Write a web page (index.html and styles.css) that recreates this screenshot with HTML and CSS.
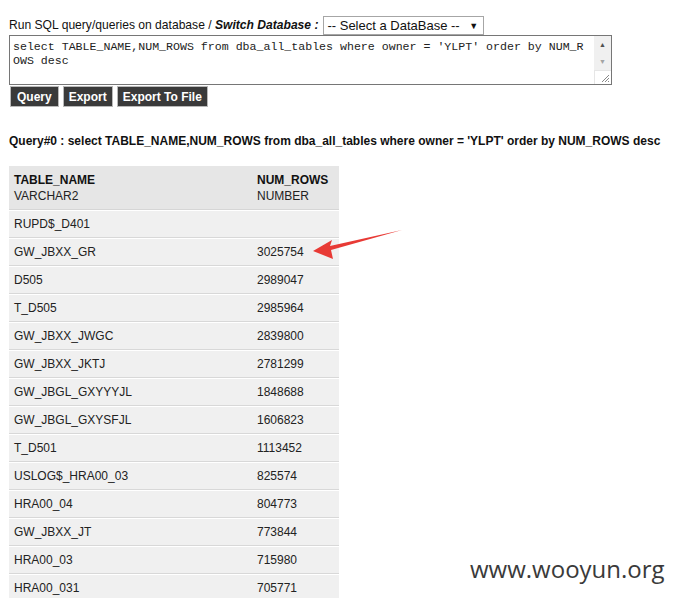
FILE: index.html
```html
<!DOCTYPE html>
<html>
<head>
<meta charset="utf-8">
<link rel="stylesheet" href="styles.css">
</head>
<body>
<form class="runner">
  <div class="topline">
    <span class="label">Run SQL query/queries on database / <b><i>Switch Database :</i></b></span>
    <span class="select">-- Select a DataBase -- <span class="caret">&#9660;</span></span>
  </div>
  <div class="editor">
    <textarea class="sql" spellcheck="false">select TABLE_NAME,NUM_ROWS from dba_all_tables where owner = 'YLPT' order by NUM_ROWS desc</textarea>
    <div class="scrollbar">
      <span class="sb-btn">&#9650;</span>
      <span class="sb-btn dim">&#9660;</span>
      <span class="grip">
        <svg width="9" height="9" viewBox="0 0 9 9"><path d="M8 1 L1 8 M8 4 L4 8 M8 7 L7 8" stroke="#888" stroke-width="1"/></svg>
      </span>
    </div>
  </div>
  <div class="buttons">
    <span class="btn">Query</span>
    <span class="btn">Export</span>
    <span class="btn">Export To File</span>
  </div>
</form>
<h3 class="qtitle">Query#0 : select TABLE_NAME,NUM_ROWS from dba_all_tables where owner = 'YLPT' order by NUM_ROWS desc</h3>
<table class="result">
  <thead>
    <tr><th><b>TABLE_NAME</b><br>VARCHAR2</th><th><b>NUM_ROWS</b><br>NUMBER</th></tr>
  </thead>
  <tbody>
    <tr><td>RUPD$_D401</td><td></td></tr>
    <tr><td>GW_JBXX_GR</td><td>3025754</td></tr>
    <tr><td>D505</td><td>2989047</td></tr>
    <tr><td>T_D505</td><td>2985964</td></tr>
    <tr><td>GW_JBXX_JWGC</td><td>2839800</td></tr>
    <tr><td>GW_JBXX_JKTJ</td><td>2781299</td></tr>
    <tr><td>GW_JBGL_GXYYYJL</td><td>1848688</td></tr>
    <tr><td>GW_JBGL_GXYSFJL</td><td>1606823</td></tr>
    <tr><td>T_D501</td><td>1113452</td></tr>
    <tr><td>USLOG$_HRA00_03</td><td>825574</td></tr>
    <tr><td>HRA00_04</td><td>804773</td></tr>
    <tr><td>GW_JBXX_JT</td><td>773844</td></tr>
    <tr><td>HRA00_03</td><td>715980</td></tr>
    <tr><td>HRA00_031</td><td>705771</td></tr>
  </tbody>
</table>
<svg class="arrow" width="100" height="34" viewBox="310 228 100 34">
  <polygon points="313,251 332,240 330,246 402,230 331,250 333,259" fill="#e83a35"/>
</svg>
<div class="watermark">www.wooyun.org</div>
</body>
</html>
```
FILE: styles.css
```css
html, body {
  margin: 0;
  padding: 0;
  background: #fff;
}
body {
  padding: 16px 0 0 9px;
  font-family: "Liberation Sans", Arial, sans-serif;
  font-size: 12px;
  color: #111;
  position: relative;
  height: 598px;
  overflow: hidden;
  box-sizing: border-box;
}
.runner {
  margin: 0;
}
.topline {
  display: flex;
  align-items: center;
  height: 19px;
}
.label {
  font-size: 12.1px;
  margin-right: 5px;
  margin-top: -1px;
}
.select {
  box-sizing: border-box;
  height: 19px;
  width: 161px;
  border: 1px solid #a6a6a6;
  padding: 0 0 0 3px;
  display: flex;
  align-items: center;
  color: #111;
  font-size: 13px;
  white-space: pre;
}
.caret {
  font-size: 9px;
  margin-left: 6px;
}
.editor {
  display: flex;
  box-sizing: border-box;
  width: 603px;
  height: 50px;
  border: 1px solid #767676;
  background: #fff;
}
.sql {
  flex: 1;
  display: block;
  box-sizing: border-box;
  height: 48px;
  margin: 0;
  border: 0;
  outline: none;
  padding: 4px 6px 0 3px;
  font-family: "Liberation Mono", "Courier New", monospace;
  font-size: 11.6px;
  line-height: 14px;
  color: #222;
  overflow: hidden;
  resize: none;
  word-break: break-all;
}
.scrollbar {
  width: 17px;
  display: flex;
  flex-direction: column;
  background: #fff;
}
.sb-btn {
  height: 17px;
  display: flex;
  align-items: center;
  justify-content: center;
  font-size: 7px;
  color: #505050;
  background: #f0f0f0;
}
.sb-btn.dim {
  color: #a3a3a3;
}
.grip {
  flex: 1;
  display: flex;
  align-items: flex-end;
  justify-content: flex-end;
  border-left: 1px solid #e6e6e6;
  border-top: 1px solid #e6e6e6;
}
.grip svg { display: block; margin: 0 1px 1px 0; }
.buttons {
  display: flex;
  gap: 4px;
  margin-top: 1px;
  margin-left: 1px;
}
.btn {
  box-sizing: border-box;
  height: 21px;
  padding: 0 5px;
  background: #3a3a3a;
  border: 1px solid #b9b9b9;
  color: #fff;
  font-weight: bold;
  font-size: 12px;
  display: flex;
  align-items: center;
}
.btn:first-child { padding: 0 6px; }
.qtitle {
  margin: 26px 0 0 0;
  font-size: 12px;
  font-weight: bold;
  line-height: 16px;
  color: #111;
}
.result {
  margin-top: 17px;
  width: 330px;
  border-collapse: separate;
  border-spacing: 0;
  font-size: 12px;
  color: #222;
}
.result th {
  background: #e6e6e6;
  text-align: left;
  font-weight: normal;
  line-height: 16px;
  padding: 6px 5px 5px 5px;
  vertical-align: top;
  border-bottom: 1px solid #d6d6d6;
}
.result th b { color: #111; }
.result th:first-child { width: 233px; }
.result td {
  background: #f0f0f0;
  height: 26px;
  padding: 0 5px;
  border-top: 1px solid #fff;
  border-bottom: 1px solid #d8d8d8;
  line-height: 16px;
}
.arrow {
  position: absolute;
  left: 310px;
  top: 228px;
}
.watermark {
  position: absolute;
  left: 470px;
  top: 552px;
  font-family: "Open Sans", sans-serif;
  font-size: 24px;
  color: #3a3a3a;
}
```
